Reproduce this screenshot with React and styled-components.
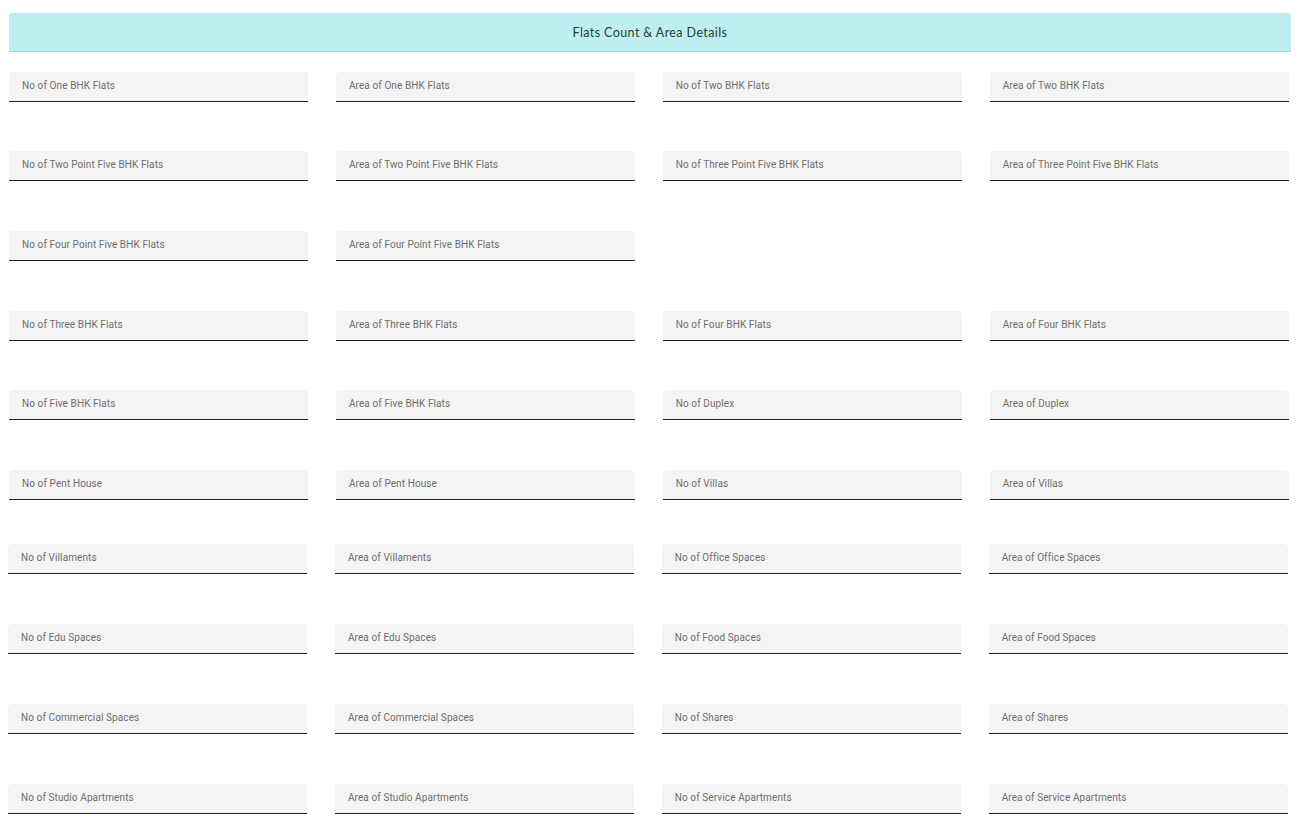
import React from 'react';
import styled, { createGlobalStyle } from 'styled-components';

const GlobalStyle = createGlobalStyle`
  body {
    margin: 0;
    background: #fff;
    font-family: Roboto, "Liberation Sans", sans-serif;
  }
`;

const Page = styled.div`
  padding: 13px 17px 0 9px;
`;

const Header = styled.div`
  height: 38px;
  background: #bdeff0;
  border-bottom: 1px solid #a2d6d8;
  border-radius: 3px 3px 0 0;
  display: flex;
  align-items: center;
  justify-content: center;
  font-family: Lato, "Open Sans", sans-serif;
  font-size: 12.5px;
  letter-spacing: 0.4px;
  color: #2e3a3a;
`;

const Grid = styled.div`
  display: grid;
  width: 1280px;
  grid-template-columns: repeat(4, 1fr);
  column-gap: 27.5px;
  row-gap: 49.7px;
  margin-top: ${props => props.top}px;
  margin-left: ${props => props.shift}px;
`;

const Field = styled.div`
  grid-column: ${props => props.col || 'auto'};
  box-sizing: border-box;
  height: 30px;
  padding: 0 0 2px 13px;
  background: #f4f4f4;
  border-bottom: 1px solid #1c1c48;
  border-radius: 4px 4px 0 0;
  display: flex;
  align-items: center;
  font-size: 10px;
  color: #6e6e6e;
  letter-spacing: 0.1px;
`;

const first = [
  ['No of One BHK Flats', 'Area of One BHK Flats', 'No of Two BHK Flats', 'Area of Two BHK Flats'],
  ['No of Two Point Five BHK Flats', 'Area of Two Point Five BHK Flats', 'No of Three Point Five BHK Flats', 'Area of Three Point Five BHK Flats'],
  ['No of Four Point Five BHK Flats', 'Area of Four Point Five BHK Flats'],
  ['No of Three BHK Flats', 'Area of Three BHK Flats', 'No of Four BHK Flats', 'Area of Four BHK Flats'],
  ['No of Five BHK Flats', 'Area of Five BHK Flats', 'No of Duplex', 'Area of Duplex'],
  ['No of Pent House', 'Area of Pent House', 'No of Villas', 'Area of Villas'],
];

const second = [
  ['No of Villaments', 'Area of Villaments', 'No of Office Spaces', 'Area of Office Spaces'],
  ['No of Edu Spaces', 'Area of Edu Spaces', 'No of Food Spaces', 'Area of Food Spaces'],
  ['No of Commercial Spaces', 'Area of Commercial Spaces', 'No of Shares', 'Area of Shares'],
  ['No of Studio Apartments', 'Area of Studio Apartments', 'No of Service Apartments', 'Area of Service Apartments'],
];

const renderRows = (rows) =>
  rows.map((row, r) =>
    row.map((label, c) => (
      <Field key={`${r}-${c}`} col={c === 0 ? 1 : undefined}>{label}</Field>
    ))
  );

export default function App() {
  return (
    <Page>
      <GlobalStyle />
      <Header>Flats Count &amp; Area Details</Header>
      <Grid top={19.5} shift={0}>{renderRows(first)}</Grid>
      <Grid top={44.5} shift={-1}>{renderRows(second)}</Grid>
    </Page>
  );
}
